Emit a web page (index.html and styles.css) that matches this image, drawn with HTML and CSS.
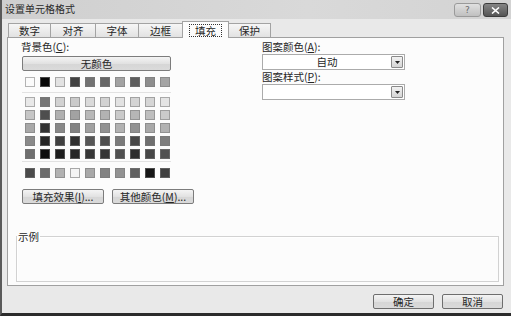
FILE: index.html
```html
<!DOCTYPE html>
<html lang="zh-CN">
<head>
<meta charset="utf-8">
<title>设置单元格格式</title>
<link rel="stylesheet" href="styles.css">
</head>
<body>
<div class="window">
  <div class="titlebar">
    <span class="title">设置单元格格式</span>
    <div class="tb-btns">
      <span class="tb-btn help">?</span>
      <span class="tb-btn close"><svg width="9" height="7" viewBox="0 0 9 7"><path d="M1 0.5 L8 6.5 M8 0.5 L1 6.5" stroke="#fff" stroke-width="1.6"/></svg></span>
    </div>
  </div>
  <div class="tabs">
    <span class="tab t1">数字</span>
    <span class="tab t2">对齐</span>
    <span class="tab t3">字体</span>
    <span class="tab t4">边框</span>
    <span class="tab t5 active"><span class="focus">填充</span></span>
    <span class="tab t6">保护</span>
  </div>
  <div class="panel">
    <div class="cols">
      <div class="left">
        <div class="label">背景色(<u>C</u>):</div>
        <div class="btn nocolor">无颜色</div>
        <div class="swatches first">
          <span class="sw" style="background:#fbfbfb"></span>
          <span class="sw" style="background:#080808"></span>
          <span class="sw" style="background:#e2e2e2"></span>
          <span class="sw" style="background:#424242"></span>
          <span class="sw" style="background:#727272"></span>
          <span class="sw" style="background:#666666"></span>
          <span class="sw" style="background:#a2a2a2"></span>
          <span class="sw" style="background:#5e5e5e"></span>
          <span class="sw" style="background:#8e8e8e"></span>
          <span class="sw" style="background:#a4a4a4"></span>
        </div>
        <div class="sep"></div>
        <div class="grid">
          <span class="sw" style="background:#e8e8e8"></span>
          <span class="sw" style="background:#767676"></span>
          <span class="sw" style="background:#d2d2d2"></span>
          <span class="sw" style="background:#cacaca"></span>
          <span class="sw" style="background:#dadada"></span>
          <span class="sw" style="background:#d2d2d2"></span>
          <span class="sw" style="background:#e2e2e2"></span>
          <span class="sw" style="background:#d4d4d4"></span>
          <span class="sw" style="background:#d6d6d6"></span>
          <span class="sw" style="background:#e4e4e4"></span>

          <span class="sw" style="background:#c6c6c6"></span>
          <span class="sw" style="background:#4e4e4e"></span>
          <span class="sw" style="background:#b0b0b0"></span>
          <span class="sw" style="background:#a2a2a2"></span>
          <span class="sw" style="background:#b8b8b8"></span>
          <span class="sw" style="background:#b2b2b2"></span>
          <span class="sw" style="background:#cacaca"></span>
          <span class="sw" style="background:#b6b6b6"></span>
          <span class="sw" style="background:#bebebe"></span>
          <span class="sw" style="background:#cacaca"></span>

          <span class="sw" style="background:#a8a8a8"></span>
          <span class="sw" style="background:#323232"></span>
          <span class="sw" style="background:#888888"></span>
          <span class="sw" style="background:#828282"></span>
          <span class="sw" style="background:#a0a0a0"></span>
          <span class="sw" style="background:#929292"></span>
          <span class="sw" style="background:#b2b2b2"></span>
          <span class="sw" style="background:#929292"></span>
          <span class="sw" style="background:#a8a8a8"></span>
          <span class="sw" style="background:#b2b2b2"></span>

          <span class="sw" style="background:#8a8a8a"></span>
          <span class="sw" style="background:#262626"></span>
          <span class="sw" style="background:#404040"></span>
          <span class="sw" style="background:#303030"></span>
          <span class="sw" style="background:#565656"></span>
          <span class="sw" style="background:#4e4e4e"></span>
          <span class="sw" style="background:#7a7a7a"></span>
          <span class="sw" style="background:#484848"></span>
          <span class="sw" style="background:#6e6e6e"></span>
          <span class="sw" style="background:#7e7e7e"></span>

          <span class="sw" style="background:#6e6e6e"></span>
          <span class="sw" style="background:#0e0e0e"></span>
          <span class="sw" style="background:#1e1e1e"></span>
          <span class="sw" style="background:#262626"></span>
          <span class="sw" style="background:#363636"></span>
          <span class="sw" style="background:#363636"></span>
          <span class="sw" style="background:#505050"></span>
          <span class="sw" style="background:#2e2e2e"></span>
          <span class="sw" style="background:#464646"></span>
          <span class="sw" style="background:#525252"></span>
        </div>
        <div class="sep sep2"></div>
        <div class="swatches last">
          <span class="sw" style="background:#4a4a4a"></span>
          <span class="sw" style="background:#6c6c6c"></span>
          <span class="sw" style="background:#b2b2b2"></span>
          <span class="sw light" style="background:#f4f4f4"></span>
          <span class="sw" style="background:#a8a8a8"></span>
          <span class="sw" style="background:#828282"></span>
          <span class="sw" style="background:#929292"></span>
          <span class="sw" style="background:#606060"></span>
          <span class="sw" style="background:#161616"></span>
          <span class="sw" style="background:#404040"></span>
        </div>
        <div class="btnrow">
          <span class="btn small">填充效果(<u>I</u>)...</span>
          <span class="btn small">其他颜色(<u>M</u>)...</span>
        </div>
      </div>
      <div class="right">
        <div class="label">图案颜色(<u>A</u>):</div>
        <div class="combo"><span class="val">自动</span><span class="drop"><svg width="5" height="3" viewBox="0 0 5 3"><path d="M0 0 H5 L2.5 3 Z" fill="#222"/></svg></span></div>
        <div class="label label2">图案样式(<u>P</u>):</div>
        <div class="combo"><span class="val"></span><span class="drop"><svg width="5" height="3" viewBox="0 0 5 3"><path d="M0 0 H5 L2.5 3 Z" fill="#222"/></svg></span></div>
      </div>
    </div>
    <fieldset class="sample"><legend>示例</legend></fieldset>
  </div>
  <div class="footer">
    <span class="btn dlg">确定</span>
    <span class="btn dlg">取消</span>
  </div>
</div>
</body>
</html>
```

FILE: styles.css
```css
* { box-sizing: border-box; }

body {
  margin: 0;
  width: 511px;
  height: 316px;
  overflow: hidden;
  background: #e9e9e9;
  font-family: "Noto Sans CJK SC", "Liberation Sans", sans-serif;
  font-size: 10.5px;
  color: #262626;
}

u { text-decoration: underline; }

.window {
  height: 316px;
  border-left: 2px solid #5a5a5a;
  border-bottom: 3px solid #2c2c2c;
  background: #e9e9e9;
  display: flex;
  flex-direction: column;
}

/* title bar */
.titlebar {
  height: 19px;
  flex: none;
  display: flex;
  align-items: flex-start;
  padding: 0 3px 0 3px;
  background: linear-gradient(to right, #cfcfcf, #d9d9d9 60%, #d3d3d3);
}
.title {
  font-size: 10px;
  line-height: 12px;
  margin-top: 3px;
  color: #2a2a2a;
}
.tb-btns {
  margin-left: auto;
  margin-top: 3px;
  display: flex;
  gap: 2px;
}
.tb-btn {
  height: 14px;
  border-radius: 3px;
  display: flex;
  align-items: center;
  justify-content: center;
}
.help {
  width: 27px;
  border: 1px solid #9a9a9a;
  background: linear-gradient(#e0e0e0, #c0c0c0);
  color: #6a6a6a;
  font-family: "DejaVu Sans", sans-serif;
  font-size: 9px;
  line-height: 12px;
}
.close {
  width: 25px;
  border: 1px solid #3c3c3c;
  background: linear-gradient(#858585, #555555);
}

/* tabs */
.tabs {
  height: 18px;
  flex: none;
  display: flex;
  align-items: flex-end;
  padding-left: 6px;
  position: relative;
  z-index: 1;
}
.tab {
  height: 14px;
  margin-right: -1px;
  border: 1px solid #a3a3a3;
  border-bottom: none;
  background: linear-gradient(#f6f6f6, #e2e2e2);
  display: flex;
  align-items: center;
  justify-content: center;
  line-height: 12px;
  padding-top: 1px;
}
.t1 { width: 43px; }
.t2 { width: 46px; }
.t3 { width: 44px; }
.t4 { width: 45px; }
.t5 { width: 47px; }
.t6 { width: 43px; }
.tab.active {
  height: 17px;
  margin-bottom: -1px;
  background: #fcfcfc;
  position: relative;
  z-index: 2;
  padding-top: 0;
}
.focus {
  border: 1px dotted #333;
  padding: 0 5px;
  line-height: 11px;
  height: 13px;
}

/* panel */
.panel {
  margin-left: 5px;
  width: 497px;
  height: 249px;
  flex: none;
  border: 1px solid #a0a0a0;
  background: #fcfcfc;
  display: flex;
  flex-direction: column;
}
.cols {
  display: flex;
}
.left {
  width: 254px;
  padding-left: 14px;
  padding-top: 3px;
}
.right {
  padding-top: 3px;
}
.label {
  line-height: 12px;
  height: 12px;
  margin-left: -1px;
  white-space: nowrap;
}
.right .label { margin-left: 0; }
.label2 {
  height: 14px;
  line-height: 13px;
}

.btn {
  border: 1px solid #7c7c7c;
  border-radius: 2px;
  background: linear-gradient(#f4f4f4, #e2e2e2 50%, #d6d6d6 51%, #dadada);
  display: flex;
  align-items: center;
  justify-content: center;
  line-height: 12px;
  white-space: nowrap;
}
.nocolor {
  margin-top: 3px;
  width: 149px;
  height: 15px;
}

.swatches {
  display: flex;
  gap: 5px;
  padding-left: 3px;
}
.swatches.first { margin-top: 6px; }
.swatches.last { margin-top: 6px; }
.sw {
  width: 10px;
  height: 10px;
  border: 1px solid rgba(120, 120, 120, 0.55);
}
.sw.light { border-color: #a8a8a8; }

.sep {
  margin-top: 5px;
  width: 149px;
  height: 1px;
  background: #e2e2e2;
}
.sep2 { margin-top: 2px; }

.grid {
  margin-top: 4px;
  padding-left: 3px;
  display: grid;
  grid-template-columns: repeat(10, 10px);
  grid-auto-rows: 10px;
  column-gap: 5px;
  row-gap: 3px;
}

.btnrow {
  margin-top: 11px;
  display: flex;
  gap: 8px;
}
.btn.small {
  width: 82px;
  height: 15px;
}

/* combos */
.combo {
  margin-top: 1px;
  width: 143px;
  height: 16px;
  border: 1px solid #ababab;
  background: #fff;
  display: flex;
  align-items: center;
  padding-right: 1px;
}
.label2 + .combo { margin-top: 0; }
.val {
  flex: 1;
  text-align: center;
  line-height: 12px;
}
.drop {
  width: 12px;
  height: 12px;
  border: 1px solid #8a8a8a;
  border-radius: 1px;
  background: linear-gradient(#f2f2f2, #d4d4d4);
  display: flex;
  align-items: center;
  justify-content: center;
}

/* sample group */
.sample {
  margin: auto 4px 3px 8px;
  padding: 0;
  height: 52px;
  border: 1px solid #d2d2d2;
  box-shadow: inset 1px 1px 0 #fff;
}
.sample legend {
  padding: 0 1px;
  margin-left: 0;
  line-height: 13px;
  font-size: 10.5px;
}

/* footer */
.footer {
  flex: none;
  display: flex;
  justify-content: flex-end;
  gap: 8px;
  padding-right: 8px;
  margin-top: 8px;
}
.btn.dlg {
  width: 61px;
  height: 15px;
  border-color: #6e6e6e;
}
```
